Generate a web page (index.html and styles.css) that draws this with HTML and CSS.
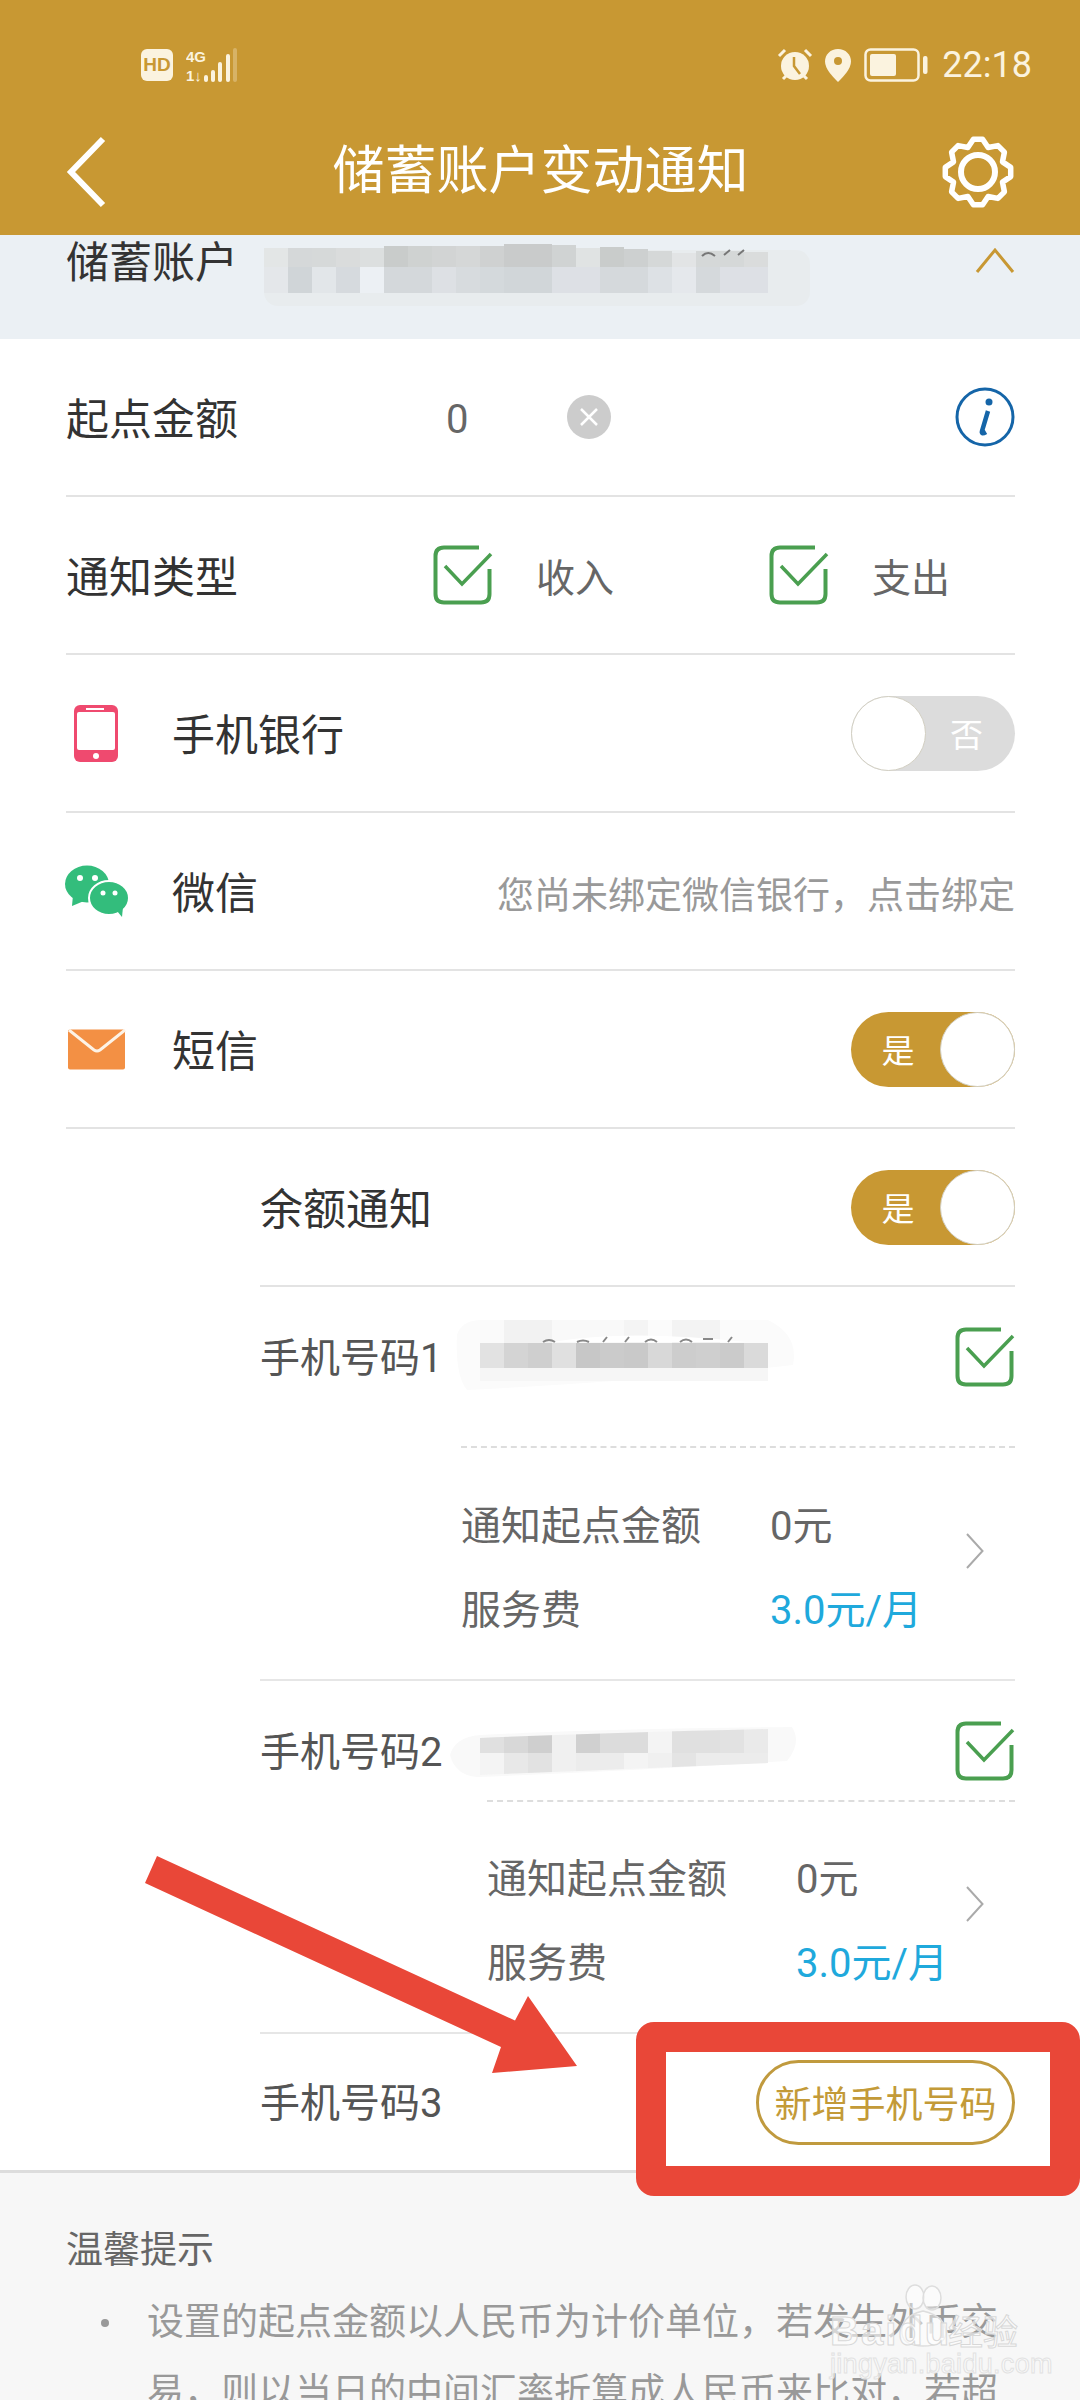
FILE: index.html
```html
<!DOCTYPE html>
<html lang="zh-CN">
<head>
    <meta charset="UTF-8">
    <meta name="viewport" content="width=device-width, initial-scale=1.0">
    <title>储蓄账户变动通知</title>
    <link rel="stylesheet" href="styles.css">
</head>
<body>
    <!-- shared icons -->
    <svg class="defs" width="0" height="0">
        <symbol id="check" viewBox="0 0 60 60">
            <path d="M46 2.500H11Q2.500 2.500 2.500 11V49Q2.500 57.500 11 57.500H48Q56.500 57.500 56.500 49V24" fill="none" stroke="#4a9f50" stroke-width="4"/>
            <path d="M12 21L29 39L58 9" fill="none" stroke="#4a9f50" stroke-width="3.500"/>
        </symbol>
        <symbol id="more" viewBox="0 0 18 36">
            <path d="M1 1L16.500 18L1 35" fill="none" stroke="#aaa" stroke-width="2"/>
        </symbol>
    </svg>

    <header class="topbar">
        <div class="status">
            <div class="status-left">
                <span class="hd">HD</span>
                <svg class="signal" width="52" height="34" viewBox="0 0 52 34">
                    <text x="0" y="14" class="net">4G</text>
                    <text x="0" y="33" class="net">1↓</text>
                    <g fill="#fbf3df">
                        <rect x="18" y="27" width="4" height="7" rx="2"/>
                        <rect x="25" y="22" width="4" height="12" rx="2"/>
                        <rect x="32" y="14" width="4" height="20" rx="2"/>
                        <rect x="40" y="6" width="4" height="28" rx="2"/>
                        <rect x="47" y="0" width="4" height="34" rx="2" opacity=".3"/>
                    </g>
                </svg>
            </div>
            <div class="status-right">
                <svg width="36" height="34" viewBox="0 0 36 34">
                    <circle cx="18" cy="18" r="14" fill="#fbf3df"/>
                    <path d="M17 9V18L23 26" fill="none" stroke="#c89833" stroke-width="2.500"/>
                    <path d="M2 8L8 2M28 2L34 8M6 31L9 28M30 31L27 28" fill="none" stroke="#fbf3df" stroke-width="3"/>
                </svg>
                <svg class="pin" width="26" height="33" viewBox="0 0 26 33">
                    <path d="M13 0C5.500 0 0 5.500 0 12.500C0 20 8 28 13 33C18 28 26 20 26 12.500C26 5.500 20.500 0 13 0Z" fill="#fbf3df"/>
                    <circle cx="13" cy="12" r="4" fill="#c89833"/>
                </svg>
                <svg class="battery" width="64" height="34" viewBox="0 0 64 34">
                    <rect x="1.500" y="1.500" width="53" height="31" rx="5" fill="none" stroke="#fbf3df" stroke-width="2.500"/>
                    <rect x="6" y="6" width="26" height="22" rx="2" fill="#fbf3df"/>
                    <rect x="59" y="8" width="4.500" height="18" rx="2" fill="#fbf3df"/>
                </svg>
                <span class="clock">22:18</span>
            </div>
        </div>
        <div class="toolbar">
            <div class="tool">
                <svg width="40" height="72" viewBox="0 0 40 72">
                    <path d="M37 3L5 36L37 69" fill="none" stroke="#fff" stroke-width="6"/>
                </svg>
            </div>
            <h1>储蓄账户变动通知</h1>
            <div class="tool">
                <svg class="gear" width="74" height="74" viewBox="0 0 74 74">
                    <path d="M32.400 4.300L41.600 4.300L47.140 12.520L56.900 10.600L63.400 17.100L61.480 26.860L69.700 32.400L69.700 41.600L61.480 47.140L63.400 56.900L56.900 63.400L47.140 61.480L41.600 69.700L32.400 69.700L26.860 61.480L17.100 63.400L10.600 56.900L12.520 47.140L4.300 41.600L4.300 32.400L12.520 26.860L10.600 17.100L17.100 10.600L26.860 12.520Z" fill="none" stroke="#fff" stroke-width="5.500" stroke-linejoin="round"/>
                    <circle cx="37" cy="37" r="17" fill="none" stroke="#fff" stroke-width="6"/>
                </svg>
            </div>
        </div>
    </header>

    <section class="account">
        <span class="account-label">储蓄账户</span>
        <svg class="account-mosaic" width="560" height="70" viewBox="0 0 560 70">
            <rect x="6" y="10" width="546" height="56" rx="14" fill="#e8ecee"/>
            <g>
                <rect x="6" y="8" width="24" height="19" fill="#e3e6e6"/><rect x="30" y="8" width="24" height="19" fill="#d5d8d9"/><rect x="54" y="8" width="24" height="19" fill="#d6d9d9"/><rect x="78" y="8" width="24" height="19" fill="#dadcdc"/><rect x="102" y="8" width="24" height="19" fill="#dcdfdf"/><rect x="126" y="6" width="24" height="21" fill="#c9cccb"/><rect x="150" y="6" width="24" height="21" fill="#cfd2d1"/><rect x="174" y="6" width="24" height="21" fill="#d2d4d4"/><rect x="198" y="6" width="24" height="21" fill="#d5d7d7"/><rect x="222" y="6" width="24" height="21" fill="#cfd1d1"/><rect x="246" y="4" width="24" height="23" fill="#c9cbcb"/><rect x="270" y="4" width="24" height="23" fill="#c9cbcb"/><rect x="294" y="5" width="24" height="22" fill="#d0d3d3"/><rect x="318" y="8" width="24" height="19" fill="#e0e3e3"/><rect x="342" y="7" width="24" height="20" fill="#c9cccb"/><rect x="366" y="9" width="24" height="18" fill="#cdd0d0"/><rect x="390" y="11" width="24" height="16" fill="#d5d8d8"/><rect x="414" y="13" width="24" height="14" fill="#e2e4e5"/><rect x="438" y="11" width="24" height="16" fill="#d5d8d8"/><rect x="462" y="11" width="24" height="16" fill="#d5d8d8"/><rect x="486" y="12" width="24" height="15" fill="#dadcdc"/>
                <rect x="6" y="27" width="24" height="26" fill="#e4e7ea"/><rect x="30" y="27" width="24" height="26" fill="#d0d5d8"/><rect x="54" y="27" width="24" height="26" fill="#e2e6e9"/><rect x="78" y="27" width="24" height="26" fill="#d6dade"/><rect x="102" y="27" width="24" height="26" fill="#ecf0f4"/><rect x="126" y="27" width="48" height="26" fill="#d4d8db"/><rect x="174" y="27" width="24" height="26" fill="#dde0e4"/><rect x="198" y="27" width="24" height="26" fill="#d7dbde"/><rect x="222" y="27" width="24" height="26" fill="#d4d9dc"/><rect x="246" y="27" width="48" height="26" fill="#d1d6d9"/><rect x="294" y="27" width="48" height="26" fill="#dde0e5"/><rect x="342" y="27" width="48" height="26" fill="#d5d9dc"/><rect x="390" y="27" width="24" height="26" fill="#dde1e5"/><rect x="414" y="27" width="24" height="26" fill="#e5e8ec"/><rect x="438" y="27" width="24" height="26" fill="#d5d9dc"/><rect x="462" y="27" width="48" height="26" fill="#dde0e5"/>
            </g>
            <path d="M444 16Q450 10 457 16M472 10L466 15M486 10L480 15" fill="none" stroke="#777" stroke-width="2"/>
        </svg>
        <svg class="account-arrow" width="40" height="26" viewBox="0 0 40 26">
            <path d="M2 25L20 3L38 25" fill="none" stroke="#c89833" stroke-width="3"/>
        </svg>
    </section>

    <main class="form">
        <div class="row">
            <span class="label label-amount">起点金额</span>
            <span class="amount">0</span>
            <svg width="44" height="44" viewBox="0 0 44 44">
                <circle cx="22" cy="22" r="22" fill="#ccc"/>
                <path d="M14 14L30 30M30 14L14 30" stroke="#fff" stroke-width="2.500"/>
            </svg>
            <svg class="push-right" width="60" height="60" viewBox="0 0 60 60">
                <circle cx="30" cy="30" r="28" fill="none" stroke="#1565a8" stroke-width="3"/>
                <path d="M33 24L27 44Q26 48 31 45" fill="none" stroke="#1565a8" stroke-width="4.500"/>
                <circle cx="34" cy="15" r="3.500" fill="#1565a8"/>
            </svg>
        </div>
        <div class="row">
            <span class="label label-type">通知类型</span>
            <div class="check-item">
                <svg width="60" height="60"><use href="#check"/></svg>
                <span>收入</span>
            </div>
            <div class="check-item">
                <svg width="60" height="60"><use href="#check"/></svg>
                <span>支出</span>
            </div>
        </div>
        <div class="row">
            <div class="channel-icon">
                <svg class="icon-phone" width="44" height="57" viewBox="0 0 44 57">
                    <rect width="44" height="57" rx="6" fill="#ef4a6f"/>
                    <rect x="3" y="7" width="38" height="38" rx="2" fill="#fff"/>
                    <rect x="12" y="3" width="18" height="2" fill="#fff"/>
                    <circle cx="22" cy="51" r="3" fill="#fff"/>
                </svg>
            </div>
            <span class="label">手机银行</span>
            <div class="toggle toggle-off push-right"><span class="knob"></span><span class="toggle-text">否</span></div>
        </div>
        <div class="row">
            <div class="channel-icon">
                <svg class="icon-wechat" width="64" height="52" viewBox="0 0 64 52">
                    <ellipse cx="22" cy="19" rx="22" ry="18.500" fill="#33bd7c"/>
                    <path d="M8 30L7 41L19 36Z" fill="#33bd7c"/>
                    <ellipse cx="44" cy="33" rx="20" ry="17" fill="#33bd7c" stroke="#fff" stroke-width="2"/>
                    <path d="M52 46L57 52L58 42Z" fill="#33bd7c"/>
                    <circle cx="15" cy="13" r="3" fill="#fff"/><circle cx="30" cy="13" r="3" fill="#fff"/>
                    <circle cx="38" cy="28" r="2.500" fill="#fff"/><circle cx="50" cy="28" r="2.500" fill="#fff"/>
                </svg>
            </div>
            <span class="label">微信</span>
            <span class="bind-tip push-right">您尚未绑定微信银行&#65292;点击绑定</span>
        </div>
        <div class="row">
            <div class="channel-icon">
                <svg class="icon-mail" width="58" height="41" viewBox="0 0 58 41">
                    <rect y="0.500" width="57" height="40" rx="2" fill="#f39044"/>
                    <path d="M1 1L26 21Q29 23 32 21L57 1" fill="none" stroke="#fdf3e6" stroke-width="3"/>
                </svg>
            </div>
            <span class="label">短信</span>
            <div class="toggle toggle-on push-right"><span class="toggle-text">是</span><span class="knob"></span></div>
        </div>

        <div class="sms">
            <div class="row">
                <span class="label">余额通知</span>
                <div class="toggle toggle-on push-right"><span class="toggle-text">是</span><span class="knob"></span></div>
            </div>

            <div class="phone">
                <div class="phone-head phone-head-tall">
                    <span class="phone-label">手机号码1</span>
                    <svg class="phone-mosaic" width="363" height="80" viewBox="0 0 363 80">
                        <path d="M33 5H321Q352 20 346 50Q200 66 20 75Q8 60 10 20Q14 6 33 5Z" fill="#fbfbfb"/>
                        <rect x="33" y="5" width="24" height="23" fill="#fafafa"/><rect x="57" y="5" width="48" height="23" fill="#f2f2f2"/><rect x="105" y="5" width="72" height="23" fill="#f9f9f9"/><rect x="177" y="5" width="24" height="23" fill="#f4f4f4"/><rect x="225" y="5" width="48" height="23" fill="#f3f3f3"/>
                        <path d="M105 27Q180 14 300 27Z" fill="#fff"/>
                        <rect x="33" y="28" width="24" height="25" fill="#e2e2e2"/><rect x="57" y="28" width="24" height="25" fill="#d4d4d4"/><rect x="81" y="28" width="24" height="25" fill="#cfcfcf"/><rect x="105" y="28" width="24" height="25" fill="#e0e0e0"/><rect x="129" y="28" width="24" height="25" fill="#c7c7c7"/><rect x="153" y="28" width="24" height="25" fill="#cbcbcb"/><rect x="177" y="28" width="24" height="25" fill="#c9c9c9"/><rect x="201" y="28" width="24" height="25" fill="#d8d8d8"/><rect x="225" y="28" width="24" height="25" fill="#cdcdcd"/><rect x="249" y="28" width="24" height="25" fill="#cfcfcf"/><rect x="273" y="28" width="24" height="25" fill="#cbcbcb"/><rect x="297" y="28" width="24" height="25" fill="#dadada"/>
                        <rect x="33" y="53" width="288" height="13" fill="#f6f6f6"/>
                        <path d="M96 27Q102 23 108 27M130 27Q136 24 142 27M160 22L156 27M182 22L178 27M198 27Q204 22 210 27M233 27Q239 22 245 27M256 24H266M285 22L281 27" fill="none" stroke="#888" stroke-width="2"/>
                    </svg>
                    <svg class="push-right" width="60" height="60"><use href="#check"/></svg>
                </div>
                <div class="details details-wide">
                    <div class="details-grid">
                        <span>通知起点金额</span><span>0元</span>
                        <span>服务费</span><span class="fee">3.0元/月</span>
                    </div>
                    <svg class="more" width="18" height="36"><use href="#more"/></svg>
                </div>
            </div>

            <div class="phone">
                <div class="phone-head phone-head-short">
                    <span class="phone-label">手机号码2</span>
                    <svg class="phone-mosaic" width="363" height="80" viewBox="0 0 363 80">
                        <defs>
                            <clipPath id="slant"><path d="M33 29Q150 24 321 20V54Q180 60 33 66Z"/></clipPath>
                        </defs>
                        <path d="M33 26Q150 20 345 18Q355 34 340 52Q180 62 30 68Q8 66 3 46Q8 28 33 26Z" fill="#f9f9f9"/>
                        <g clip-path="url(#slant)">
                            <rect x="33" y="10" width="24" height="34" fill="#e0e0e0"/><rect x="57" y="10" width="24" height="34" fill="#d8d8d8"/><rect x="81" y="10" width="24" height="34" fill="#cfcfcf"/><rect x="105" y="10" width="24" height="34" fill="#f0f0f0"/><rect x="129" y="10" width="24" height="34" fill="#d0d0d0"/><rect x="153" y="10" width="48" height="34" fill="#dcdcdc"/><rect x="201" y="10" width="24" height="34" fill="#f4f4f4"/><rect x="225" y="10" width="48" height="34" fill="#e0e0e0"/><rect x="273" y="10" width="24" height="34" fill="#e2e2e2"/><rect x="297" y="10" width="24" height="34" fill="#eaeaea"/>
                            <rect x="33" y="44" width="24" height="30" fill="#f4f4f4"/><rect x="57" y="44" width="24" height="30" fill="#e8e8e8"/><rect x="81" y="44" width="24" height="30" fill="#e2e2e2"/><rect x="105" y="44" width="24" height="30" fill="#f0f0f0"/><rect x="129" y="44" width="48" height="30" fill="#ececec"/><rect x="177" y="44" width="24" height="30" fill="#f4f4f4"/><rect x="201" y="44" width="24" height="30" fill="#f0f0f0"/><rect x="225" y="44" width="24" height="30" fill="#e4e4e4"/><rect x="249" y="44" width="72" height="30" fill="#ececec"/>
                        </g>
                    </svg>
                    <svg class="push-right" width="60" height="60"><use href="#check"/></svg>
                </div>
                <div class="details details-narrow">
                    <div class="details-grid">
                        <span>通知起点金额</span><span>0元</span>
                        <span>服务费</span><span class="fee">3.0元/月</span>
                    </div>
                    <svg class="more" width="18" height="36"><use href="#more"/></svg>
                </div>
            </div>

            <div class="phone-add">
                <span class="phone-label">手机号码3</span>
                <button class="add-btn">新增手机号码</button>
            </div>
        </div>
    </main>

    <section class="tips">
        <h2>温馨提示</h2>
        <div class="tip-item">
            <span class="dot"></span>
            <p>设置的起点金额以人民币为计价单位&#65292;若发生外币交易&#65292;则以当日的中间汇率折算成人民币来比对&#65292;若超</p>
        </div>
    </section>

    <!-- annotations drawn over the screenshot -->
    <svg class="arrow" width="440" height="220" viewBox="0 0 440 220">
        <path d="M17 0L375 164.500L388 140L437 210L352 217L361 191L5 27Z" fill="#e94738"/>
    </svg>
    <div class="red-box"></div>

    <div class="watermark">
        <svg class="paw" width="70" height="70" viewBox="0 0 70 70">
            <g fill="#fff" fill-opacity=".45" stroke="#ddd" stroke-width="1.500">
                <ellipse cx="23" cy="13" rx="9" ry="12"/>
                <ellipse cx="40" cy="14" rx="9" ry="12"/>
                <path d="M10 50Q8 32 31 27Q54 32 54 50Q52 62 31 62Q12 62 10 50Z"/>
            </g>
        </svg>
        <div class="wm-brand"><span class="wm-name">Baidu</span><span class="wm-cn">经验</span></div>
        <div class="wm-url">jingyan.baidu.com</div>
    </div>
</body>
</html>
```

FILE: styles.css
```css
* {
    box-sizing: border-box;
}
body {
    font-family: Roboto, "Noto Sans CJK SC", sans-serif;
    margin: 0;
    width: 1080px;
    height: 2400px;
    overflow: hidden;
    position: relative;
    background-color: #fff;
    color: #333;
}
svg {
    display: block;
    flex-shrink: 0;
}
.defs {
    position: absolute;
}

/* top bar */
.topbar {
    background-color: #c89833;
    height: 235px;
    padding-top: 48px;
    color: #fff;
}
.status {
    display: flex;
    justify-content: space-between;
    align-items: center;
    height: 34px;
    padding: 0 48px 0 141px;
}
.status-left,
.status-right {
    display: flex;
    align-items: center;
}
.hd {
    width: 32px;
    height: 32px;
    border-radius: 6px;
    background-color: #fbf3df;
    color: #c89833;
    font-family: "Liberation Sans", sans-serif;
    font-size: 19px;
    font-weight: bold;
    line-height: 32px;
    text-align: center;
}
.signal {
    margin-left: 13px;
}
.net {
    fill: #fbf3df;
    font-family: "Liberation Sans", sans-serif;
    font-size: 15px;
    font-weight: bold;
}
.pin {
    margin-left: 12px;
}
.battery {
    margin-left: 13px;
}
.clock {
    margin-left: 14px;
    font-size: 36px;
    line-height: 34px;
    color: #fbf3df;
}
.toolbar {
    display: flex;
    align-items: center;
    justify-content: space-between;
    padding: 0 65px 0 66px;
    height: 90px;
    margin-top: 45px;
}
.tool {
    width: 74px;
}
.toolbar h1 {
    margin: 0;
    font-size: 52px;
    font-weight: 400;
    line-height: 90px;
    color: #fff;
}

/* account strip */
.account {
    display: flex;
    align-items: flex-start;
    height: 104px;
    padding: 0 65px 0 66px;
    background-color: #ebf0f4;
    overflow: hidden;
}
.account-label {
    font-size: 43px;
    line-height: 56px;
}
.account-mosaic {
    margin: 5px 0 0 20px;
}
.account-arrow {
    margin: 12px 0 0 auto;
}

/* form rows */
.form {
    padding: 0 65px 0 66px;
}
.row {
    display: flex;
    align-items: center;
    height: 158px;
    border-bottom: 2px solid #e3e3e3;
}
.label {
    font-size: 43px;
    line-height: 56px;
    padding-top: 6px;
}
.label-amount {
    width: 380px;
}
.label-type {
    width: 367px;
}
.amount {
    width: 121px;
    font-size: 40px;
    color: #666;
    padding-top: 4px;
}
.push-right {
    margin-left: auto;
}
.check-item {
    display: flex;
    align-items: center;
    flex-shrink: 0;
    gap: 43px;
    width: 336px;
    font-size: 39px;
    color: #666;
}
.check-item:last-child {
    width: auto;
}
.channel-icon {
    width: 106px;
}
.icon-phone {
    margin-left: 8px;
}
.icon-wechat {
    margin-left: -1px;
}
.icon-mail {
    margin-left: 2px;
}
.bind-tip {
    font-size: 37px;
    color: #999;
    padding-top: 4px;
}
.toggle {
    display: flex;
    align-items: center;
    width: 164px;
    height: 75px;
    border-radius: 38px;
}
.toggle-on {
    background-color: #c89833;
    padding-left: 5px;
}
.toggle-off {
    background-color: #dcdcdc;
    padding-right: 8px;
}
.knob {
    width: 75px;
    height: 75px;
    border-radius: 50%;
    background-color: #fff;
    border: 1px solid #d2cfc2;
}
.toggle-text {
    flex: 1;
    text-align: center;
    font-size: 33px;
    color: #fff;
}

/* sms numbers */
.sms {
    margin-left: 194px;
}
.phone {
    border-bottom: 2px solid #e6e6e6;
}
.phone-head {
    display: flex;
    align-items: flex-start;
    padding-top: 40px;
}
.phone-head-tall {
    height: 159px;
}
.phone-head-short {
    height: 119px;
}
.phone-label {
    width: 187px;
    font-size: 40px;
    line-height: 58px;
    padding-top: 3px;
    color: #555;
}
.phone-mosaic {
    margin-top: -12px;
}
.details {
    display: flex;
    justify-content: space-between;
    align-items: center;
    padding-right: 31px;
    border-top: 2px dashed #ddd;
    font-size: 40px;
    color: #666;
}
.details-wide {
    margin-left: 201px;
    padding-top: 37px;
    padding-bottom: 26px;
}
.details-narrow {
    margin-left: 227px;
    padding-top: 36px;
    padding-bottom: 26px;
}
.details-grid {
    display: grid;
    grid-template-columns: 309px auto;
    line-height: 84px;
}
.fee {
    color: #1fa9dc;
}
.more {
    margin-bottom: 36px;
}
.phone-add {
    display: flex;
    align-items: center;
    justify-content: space-between;
    height: 136px;
}
.add-btn {
    width: 259px;
    height: 85px;
    padding: 0;
    border: 3px solid #c09a3e;
    border-radius: 43px;
    background: #fff;
    color: #c39a38;
    font-family: inherit;
    font-size: 37px;
}

/* tips */
.tips {
    height: 232px;
    padding: 48px 66px 0;
    background-color: #f7f7f7;
    border-top: 3px solid #ddd;
}
.tips h2 {
    margin: 0 0 7px;
    font-size: 37px;
    font-weight: 400;
    line-height: 60px;
    color: #666;
}
.tip-item {
    display: flex;
    align-items: flex-start;
}
.dot {
    width: 8px;
    height: 8px;
    margin: 31px 38px 0 35px;
    border-radius: 50%;
    background-color: #999;
    flex-shrink: 0;
}
.tip-item p {
    margin: 0;
    width: 860px;
    font-size: 37px;
    line-height: 70px;
    color: #999;
}

/* overlays */
.arrow {
    position: absolute;
    left: 140px;
    top: 1856px;
}
.red-box {
    position: absolute;
    left: 636px;
    top: 2022px;
    width: 444px;
    height: 174px;
    border: 30px solid #e94738;
    border-radius: 18px;
}
.watermark {
    position: absolute;
    left: 830px;
    top: 2284px;
    width: 200px;
    color: rgba(255, 255, 255, 0.6);
    font-family: "Liberation Sans", sans-serif;
}
.paw {
    position: absolute;
    left: 62px;
    top: 0;
}
.wm-brand {
    display: flex;
    align-items: baseline;
    padding-top: 26px;
    position: relative;
    -webkit-text-stroke: 1px #d8d8d8;
}
.wm-name {
    width: 118px;
    font-size: 40px;
    font-weight: bold;
    letter-spacing: 2px;
    line-height: 40px;
}
.wm-cn {
    font-family: "Noto Sans CJK SC", sans-serif;
    font-size: 35px;
    line-height: 40px;
}
.wm-url {
    margin-top: -2px;
    font-size: 27px;
    line-height: 30px;
    letter-spacing: 0.3px;
    -webkit-text-stroke: 1px #e2e2e2;
}
```
